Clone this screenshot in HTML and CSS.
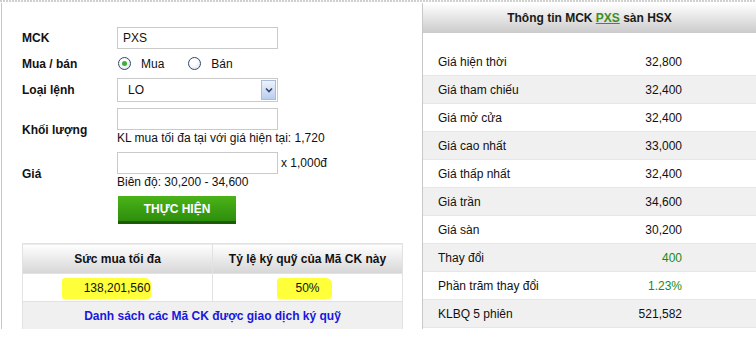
FILE: index.html
```html
<!DOCTYPE html>
<html lang="vi">
<head>
  <meta charset="UTF-8">
  <title>Đặt lệnh ký quỹ</title>
  <link rel="stylesheet" href="styles.css">
</head>
<body>
  <div class="top-rule"></div>
  <div class="page">
    <div class="order-panel">
      <form class="order-form">
        <label class="field-label">MCK</label>
        <div class="field"><input type="text" class="text-input" value="PXS"></div>

        <label class="field-label">Mua / bán</label>
        <div class="field radios">
          <span class="radio checked"></span><span class="radio-text">Mua</span>
          <span class="radio second"></span><span class="radio-text">Bán</span>
        </div>

        <label class="field-label">Loại lệnh</label>
        <div class="field">
          <div class="select">
            <span>LO</span>
            <span class="select-arrow">
              <svg width="8" height="6" viewBox="0 0 8 6"><path d="M1 1.5 L4 4.5 L7 1.5" fill="none" stroke="#34466a" stroke-width="1.6"/></svg>
            </span>
          </div>
        </div>

        <label class="field-label shifted">Khối lượng</label>
        <div class="field stacked">
          <input type="text" class="text-input">
          <div class="note">KL mua tối đa tại với giá hiện tại: 1,720</div>
        </div>

        <label class="field-label shifted">Giá</label>
        <div class="field stacked">
          <div class="price-line"><input type="text" class="text-input"><span class="unit">x 1,000đ</span></div>
          <div class="note">Biên độ: 30,200 - 34,600</div>
        </div>

        <span></span>
        <div class="field"><button type="button" class="submit-btn">THỰC HIỆN</button></div>
      </form>

      <table class="margin-table">
        <tr>
          <th>Sức mua tối đa</th>
          <th>Tỷ lệ ký quỹ của Mã CK này</th>
        </tr>
        <tr>
          <td><span class="mark mark-power">138,201,560</span></td>
          <td><span class="mark mark-rate">50%</span></td>
        </tr>
        <tr>
          <td colspan="2" class="list-cell"><a href="#" class="list-link">Danh sách các Mã CK được giao dịch ký quỹ</a></td>
        </tr>
      </table>
    </div>

    <div class="info-panel">
      <div class="info-header">Thông tin MCK <a href="#">PXS</a> sàn HSX</div>
      <div class="info-rows">
        <div class="info-row"><span>Giá hiện thời</span><span class="num">32,800</span></div>
        <div class="info-row"><span>Giá tham chiếu</span><span class="num">32,400</span></div>
        <div class="info-row"><span>Giá mở cửa</span><span class="num">32,400</span></div>
        <div class="info-row"><span>Giá cao nhất</span><span class="num">33,000</span></div>
        <div class="info-row"><span>Giá thấp nhất</span><span class="num">32,400</span></div>
        <div class="info-row"><span>Giá trần</span><span class="num">34,600</span></div>
        <div class="info-row"><span>Giá sàn</span><span class="num">30,200</span></div>
        <div class="info-row"><span>Thay đổi</span><span class="num up">400</span></div>
        <div class="info-row"><span>Phần trăm thay đổi</span><span class="num up">1.23%</span></div>
        <div class="info-row"><span>KLBQ 5 phiên</span><span class="num">521,582</span></div>
      </div>
    </div>
  </div>
</body>
</html>
```

FILE: styles.css
```css
body {
  margin: 0;
  font-family: "Liberation Sans", Arial, sans-serif;
  font-size: 12px;
  color: #111;
  background: #fff;
}
.top-rule {
  height: 2px;
  margin-bottom: 1px;
  background: repeating-linear-gradient(90deg, #cfcfcf 0 2px, transparent 2px 3px);
}
.page {
  display: flex;
  padding-left: 1px;
  height: 326px;
}
.order-panel {
  width: 421px;
  box-sizing: border-box;
  border-left: 1px solid #c8c8c8;
  padding: 24px 0 0 20px;
}
.order-form {
  display: grid;
  grid-template-columns: 95px 1fr;
  grid-template-rows: 22px 17px 24px 38px 38px 28px;
  row-gap: 6px;
}
.field-label {
  font-weight: bold;
  align-self: center;
}
.field-label.shifted {
  margin-top: 6px;
}
.field {
  display: flex;
  align-items: center;
}
.field.stacked {
  flex-direction: column;
  align-items: flex-start;
}
.text-input {
  width: 161px;
  height: 22px;
  box-sizing: border-box;
  border: 1px solid #cacaca;
  padding: 0 5px;
  margin: 0;
  font-family: inherit;
  font-size: 12px;
  color: #111;
  outline: none;
}
.note {
  line-height: 16px;
}
.price-line {
  display: flex;
  align-items: center;
}
.unit {
  margin-left: 3px;
}
.radios {
  padding-left: 1px;
}
.radio {
  width: 11px;
  height: 11px;
  border: 1px solid #2c4a78;
  border-radius: 50%;
  background: radial-gradient(circle at 40% 35%, #fff 30%, #d8dde6);
  position: relative;
}
.radio.checked::after {
  content: "";
  position: absolute;
  left: 3px;
  top: 3px;
  width: 5px;
  height: 5px;
  border-radius: 50%;
  background: #3fae32;
}
.radio.second {
  margin-left: 24px;
}
.radio-text {
  margin-left: 10px;
}
.select {
  width: 161px;
  height: 24px;
  box-sizing: border-box;
  border: 1px solid #cacaca;
  display: flex;
  align-items: center;
  justify-content: space-between;
  padding: 0 0 0 10px;
}
.select-arrow {
  width: 15px;
  height: 20px;
  margin-right: 1px;
  box-sizing: border-box;
  border: 1px solid #a9bcdc;
  background: linear-gradient(#eef3fc, #b9cdef);
  display: flex;
  align-items: center;
  justify-content: center;
}
.submit-btn {
  margin-left: 1px;
  width: 118px;
  height: 28px;
  border: none;
  border-bottom: 3px solid #1e5a08;
  background: linear-gradient(#4bb318, #2d8e0c);
  color: #fff;
  font-family: inherit;
  font-size: 12px;
  font-weight: bold;
  padding: 0;
  cursor: pointer;
}
.margin-table {
  margin-top: 19px;
  width: 381px;
  border-collapse: collapse;
  table-layout: fixed;
}
.margin-table th,
.margin-table td {
  border: 1px solid #e2e2e2;
  text-align: center;
  padding: 0;
}
.margin-table th {
  height: 29px;
  font-weight: bold;
  background: linear-gradient(#fff, #d6d6d6);
}
.margin-table td {
  height: 27px;
}
.mark {
  background: #ffff3a;
  padding: 3px 1px 4px 22px;
  margin-left: -22px;
  border-radius: 3px 6px 4px 2px;
}
.mark-rate {
  padding: 3px 12px 4px 18px;
  margin-left: -18px;
  margin-right: -12px;
}
.list-cell {
  background: #f0f0f0;
}
.list-link {
  color: #1818dc;
  font-weight: bold;
  text-decoration: none;
}
.info-panel {
  flex: 1;
  border-left: 1px solid #c8c8c8;
  margin-left: 0;
}
.info-header {
  height: 30px;
  line-height: 30px;
  text-align: center;
  font-weight: bold;
  color: #1a1a1a;
  background: linear-gradient(#fff, #cbcbcb);
}
.info-header a {
  color: #3f8f22;
}
.info-rows {
  margin-top: 15px;
}
.info-row {
  display: grid;
  grid-template-columns: 160px 84px 1fr;
  height: 28px;
  box-sizing: border-box;
  align-items: center;
  padding-left: 15px;
  border-bottom: 1px solid #e6e6e6;
}
.info-row:nth-child(even) {
  background: #f0f0f0;
}
.num {
  text-align: right;
}
.num.up {
  color: #1b8a12;
}
```
